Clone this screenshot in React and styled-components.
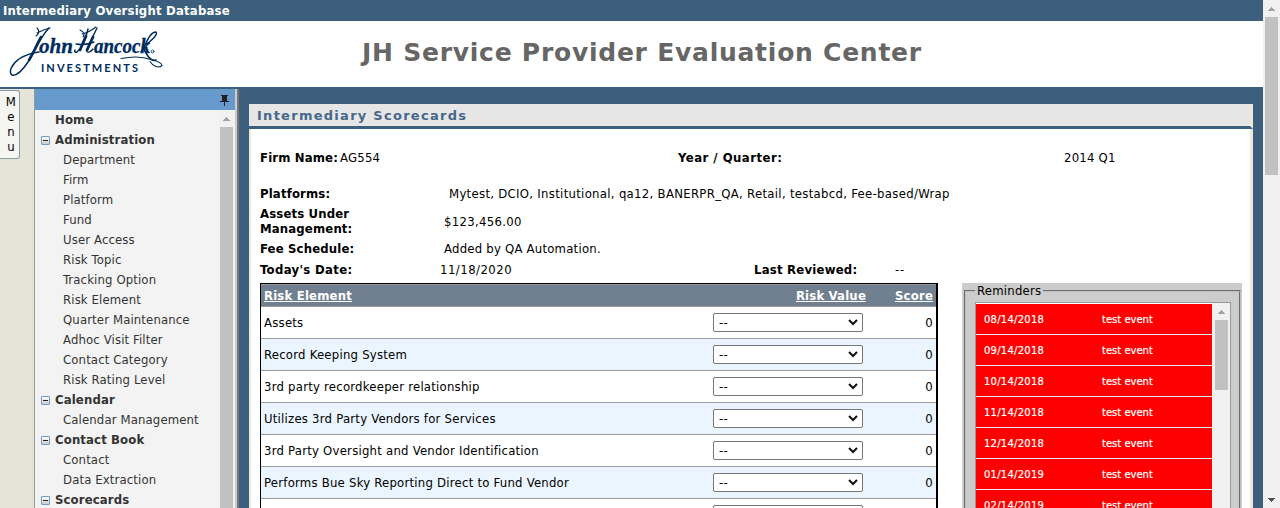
import React from "react";
import styled, { createGlobalStyle } from "styled-components";

const Global = createGlobalStyle`
  * { box-sizing: border-box; }
  html, body, #root { margin: 0; height: 100%; overflow: hidden; }
  body { font-family: "DejaVu Sans Condensed", "DejaVu Sans", sans-serif; font-size: 13px; font-stretch: condensed; letter-spacing: 0.23px; color: #000; background: #3b5f7c; line-height: 15px; }
`;

const Window = styled.div`display: flex; width: 1280px; height: 508px; overflow: hidden;`;
const Page = styled.div`display: flex; flex-direction: column; width: 1263px; height: 508px;`;
const TopBar = styled.div`flex: none; height: 21px; padding: 3px; color: #fff; font-weight: bold; line-height: 15px; letter-spacing: 0.2px;`;
const Banner = styled.header`flex: none; display: flex; height: 66px; background: #fff; margin-bottom: 2px;`;
const Title = styled.h1`margin: 0; padding: 16px 0 0 196px; font-family: "DejaVu Sans", sans-serif; font-stretch: normal; font-size: 25px; line-height: 32px; letter-spacing: 0.75px; color: #666; white-space: nowrap;`;
const Body = styled.div`display: flex; height: 419px;`;

const Rail = styled.div`flex: none; width: 34px; background: #e5e5d7;`;
const MenuTab = styled.div`display: flex; flex-direction: column; align-items: center; width: 20px; height: 69px; margin-top: 1px; padding: 3px 0 0 3px; border: 1px solid #8a9ba5; border-left: 0; border-radius: 0 3px 3px 0; background: #f5f5f2;`;
const Side = styled.nav`flex: none; width: 203px; height: 419px; border-left: 1px solid #999; border-right: 2px solid #ccc; box-shadow: 2px 0 #777; background: #f3f3f3;`;
const SideHead = styled.div`display: flex; justify-content: flex-end; height: 21px; padding: 6px 6px 0 0; background: #69c;`;
const SideBody = styled.div`display: flex; justify-content: space-between; height: 398px;`;
const Tree = styled.div`letter-spacing: 0.13px;`;
const Item = styled.div`display: flex; align-items: center; height: 20px; padding-bottom: 2px; padding-left: ${p => p.$level ? 28 : 6}px; white-space: nowrap; color: #333; font-weight: ${p => p.$level ? "normal" : "bold"};`;
const Toggle = styled.span`display: flex; align-items: center; justify-content: center; width: 9px; height: 9px; margin: 2px 5px 0 0; border: 1px solid ${p => p.$hide ? "transparent" : "#6d9bc8"}; border-radius: 1px; background: ${p => p.$hide ? "none" : "linear-gradient(#fff, #ccc)"}; &::after { content: ""; width: 5px; height: 1px; background: ${p => p.$hide ? "transparent" : "#222"}; }`;

const Scroll = styled.div`flex: none; display: flex; flex-direction: column; align-items: center; width: 17px; height: 100%; background: #f1f1f1;`;
const Arrow = styled.span`flex: none; display: flex; align-items: center; justify-content: center; height: 17px; width: 17px; margin-top: ${p => p.$down ? "auto" : 0};`;
const Thumb = styled.div`width: 13px; height: ${p => p.$h}px; background: #c1c1c1;`;

const Panel = styled.main`display: flex; flex-direction: column; width: 1004px; height: 404px; margin: 15px 0 0 12px;`;
const PanelHead = styled.h2`flex: none; height: 25px; margin: 0; padding: 4px 8px 3px; font-family: "DejaVu Sans", sans-serif; font-stretch: normal; font-size: 13px; line-height: 15px; letter-spacing: 1.27px; color: #46688a; background: #e6e6e6; border-bottom: 3px solid #3b5f7c; border-right: 3px solid #ece9d8;`;
const PanelBody = styled.div`height: 379px; padding: 0 8px 0 9px; background: #fff; border-left: 2px solid #ece9d8; border-right: 3px solid #ece9d8;`;
const Info = styled.div`display: flex; align-items: center; height: ${p => p.$h}px; margin-top: ${p => p.$mt || 0}px; white-space: nowrap;`;
const Label = styled.b`flex: none; width: ${p => p.$w}px; letter-spacing: ${p => p.$ls || 0.15}px; white-space: pre-line;`;
const Value = styled.span`flex: none; width: ${p => p.$w ? p.$w + "px" : "auto"}; letter-spacing: ${p => p.$ls || 0.22}px;`;
const Columns = styled.div`display: flex; gap: 24px; margin-top: 4px;`;
const Grid = styled.div`width: 678px; border: solid #000; border-width: 1px 2px 0 1px;`;
const GridHead = styled.div`display: grid; grid-template-columns: 1fr auto 67px; height: 23px; padding: 3px 3px 0; border: solid #999; border-width: 1px 0 1px; background: #708090; color: #fff; font-weight: bold; text-decoration: underline; letter-spacing: 0.18px; & > :last-child { text-align: right; }`;
const GridRow = styled.div`display: grid; grid-template-columns: 1fr 150px 70px; align-items: center; height: 32px; padding: 0 3px; border-bottom: 1px solid #999; background: ${p => p.$alt ? "#ebf5ff" : "#fff"}; & > :last-child { text-align: right; }`;
const Select = styled.div`display: flex; align-items: center; justify-content: space-between; height: 19px; padding: 0 4px 0 5px; border: 1px solid #767676; border-radius: 2px; background: #fff;`;

const Reminders = styled.section`width: 280px; height: 225px; padding: 0 2px; background: #ccc;`;
const Field = styled.fieldset`height: 260px; margin: 0; padding: 4px 8px 0 9px; border: 2px groove #c0c0c0;`;
const Legend = styled.legend`padding: 0 2px;`;
const EventBox = styled.div`display: flex; width: 256px; height: 240px; border: 1px solid #999; background: #fff;`;
const Events = styled.div`width: 237px; padding-top: 1px;`;
const Event = styled.div`display: grid; grid-template-columns: 118px 1fr; align-items: center; width: 236px; height: 31px; padding-left: 8px; border-bottom: 1px solid #e9e9e9; background: #f00; color: #fff; font-family: "DejaVu Sans", sans-serif; font-stretch: normal; font-size: 10px; letter-spacing: 0; -webkit-text-stroke: 0.2px #fff; & > :first-child { letter-spacing: 0.25px; }`;

const Up = ({ c = "#a3a3a3" }) => <svg width="7" height="4" shapeRendering="crispEdges"><path d="M3 0h1v1h1v1h1v1h1v1H0V3h1V2h1V1h1z" fill={c} /></svg>;
const Down = () => <svg width="7" height="4" shapeRendering="crispEdges"><path d="M0 0h7v1H6v1H5v1H4v1H3V3H2V2H1V1H0z" fill="#505050" /></svg>;

const Logo = () => (
  <svg width="166" height="66" viewBox="0 21 166 66" fill="none" stroke="#002b5c" strokeLinecap="round" letterSpacing="0">
    <path d="M37 28c3 3 2 6-1 8M37 33c4-2 8-4 13-5" strokeWidth="1.1" />
    <path d="M49 28C40 37 36 50 28 62C22 71 16 76 12 75C8 72 12 64 19 59C25 55 32 53 39 52" strokeWidth="1.5" />
    <path d="M41 37C37 44 34 52 29 60" strokeWidth="2.6" />
    <path d="M80 30c4 2 5 4 3 7M82 34c5-1 10-4 14-7" strokeWidth="1.1" />
    <path d="M88 29C86 38 82 48 77 52C75 53 74 51 75 50M97 28C93 36 90 43 87 50c-1 3 3 3 6-1" strokeWidth="1.4" />
    <path d="M86 36l-6 14M93 37l-6 13" strokeWidth="2.8" />
    <path d="M76 44c6 1 11 1 18-2" strokeWidth="1.4" />
    <path d="M141 52C146 45 149 32 156 32C159 34 149 43 145 45" strokeWidth="1.4" />
    <path d="M143 46C145 54 151 62 156 60" strokeWidth="1.6" />
    <path d="M121 58.500c10-2 22-2 30 1c8 2 11 4 11 6c-3 3-9 1-12-4" strokeWidth="1.1" />
    <circle cx="152.500" cy="51.500" r="1.500" strokeWidth="0.8" />
    <g fill="#002b5c" strokeWidth="0.3">
      <text x="39" y="53" fontFamily="Liberation Serif" fontStyle="italic" fontWeight="bold" fontSize="21" textLength="34" lengthAdjust="spacingAndGlyphs">ohn</text>
      <text x="94" y="53" fontFamily="Liberation Serif" fontStyle="italic" fontWeight="bold" fontSize="20" textLength="56" lengthAdjust="spacingAndGlyphs">ancock</text>
      <text x="41" y="72" stroke="none" fontFamily="Lato" fontSize="11" fontWeight="bold" textLength="97">INVESTMENTS</text>
    </g>
  </svg>
);
const Pin = () => <svg width="9" height="12" viewBox="0 0 9 12"><path d="M1 0h7v1H7v5h2v1H5v4H4V7H0V6h2V1H1z" fill="#222" /></svg>;

const menu = ["*Home", "*Administration", "Department", "Firm", "Platform", "Fund", "User Access", "Risk Topic", "Tracking Option", "Risk Element", "Quarter Maintenance", "Adhoc Visit Filter", "Contact Category", "Risk Rating Level", "*Calendar", "Calendar Management", "*Contact Book", "Contact", "Data Extraction", "*Scorecards"];
const risks = ["Assets", "Record Keeping System", "3rd party recordkeeper relationship", "Utilizes 3rd Party Vendors for Services", "3rd Party Oversight and Vendor Identification", "Performs Bue Sky Reporting Direct to Fund Vendor"];
const dates = ["08/14/2018", "09/14/2018", "10/14/2018", "11/14/2018", "12/14/2018", "01/14/2019", "02/14/2019"];

const RiskRow = ({ name, score, value, alt }) => (
  <GridRow $alt={alt}>
    <span>{name}</span>
    <Select><span>{value}</span><svg width="10" height="7" viewBox="0 0 10 7"><path d="M1 1l4 4 4-4" fill="none" stroke="#111" strokeWidth="2" /></svg></Select>
    <span>{score}</span>
  </GridRow>
);

export default function App() {
  return (
    <Window>
      <Global />
      <Page>
        <TopBar>Intermediary Oversight Database</TopBar>
        <Banner><Logo /><Title>JH Service Provider Evaluation Center</Title></Banner>
        <Body>
          <Rail><MenuTab>{[..."Menu"].map(c => <span key={c}>{c}</span>)}</MenuTab></Rail>
          <Side>
            <SideHead><Pin /></SideHead>
            <SideBody>
              <Tree>{menu.map(m => m[0] === "*"
                ? <Item key={m}><Toggle $hide={m === "*Home"} />{m.slice(1)}</Item>
                : <Item key={m} $level={1}>{m}</Item>)}</Tree>
              <Scroll><Arrow><Up /></Arrow><Thumb $h={381} /></Scroll>
            </SideBody>
          </Side>
          <Panel>
            <PanelHead>Intermediary Scorecards</PanelHead>
            <PanelBody>
              <Info $h={20} $mt={18}><Label $w={80}>Firm Name:</Label><Value $w={338}>AG554</Value><Label $w={386} $ls={0.48}>Year / Quarter:</Label><Value>2014 Q1</Value></Info>
              <Info $h={20} $mt={16}><Label $w={189}>Platforms:</Label><Value $ls={0.3}>Mytest, DCIO, Institutional, qa12, BANERPR_QA, Retail, testabcd, Fee-based/Wrap</Value></Info>
              <Info $h={34} $mt={1}><Label $w={184}>{"Assets Under\nManagement:"}</Label><Value $ls={0.3}>$123,456.00</Value></Info>
              <Info $h={20}><Label $w={184}>Fee Schedule:</Label><Value>Added by QA Automation.</Value></Info>
              <Info $h={20} $mt={1}><Label $w={180} $ls={0.33}>Today's Date:</Label><Value $w={314} $ls={0.47}>11/18/2020</Value><Label $w={141} $ls={0.22}>Last Reviewed:</Label><Value $ls={0.7}>--</Value></Info>
              <Columns>
                <Grid>
                  <GridHead><span>Risk Element</span><span>Risk Value</span><span>Score</span></GridHead>
                  {risks.map((r, i) => <RiskRow key={r} name={r} value="--" score="0" alt={i % 2} />)}
                  <RiskRow />
                </Grid>
                <Reminders>
                  <Field><Legend>Reminders</Legend>
                    <EventBox>
                      <Events>{dates.map(d => <Event key={d}><span>{d}</span><span>test event</span></Event>)}</Events>
                      <Scroll><Arrow><Up /></Arrow><Thumb $h={70} /></Scroll>
                    </EventBox>
                  </Field>
                </Reminders>
              </Columns>
            </PanelBody>
          </Panel>
        </Body>
      </Page>
      <Scroll><Arrow><Up /></Arrow><Thumb $h={158} /><Arrow $down><Down /></Arrow></Scroll>
    </Window>
  );
}
